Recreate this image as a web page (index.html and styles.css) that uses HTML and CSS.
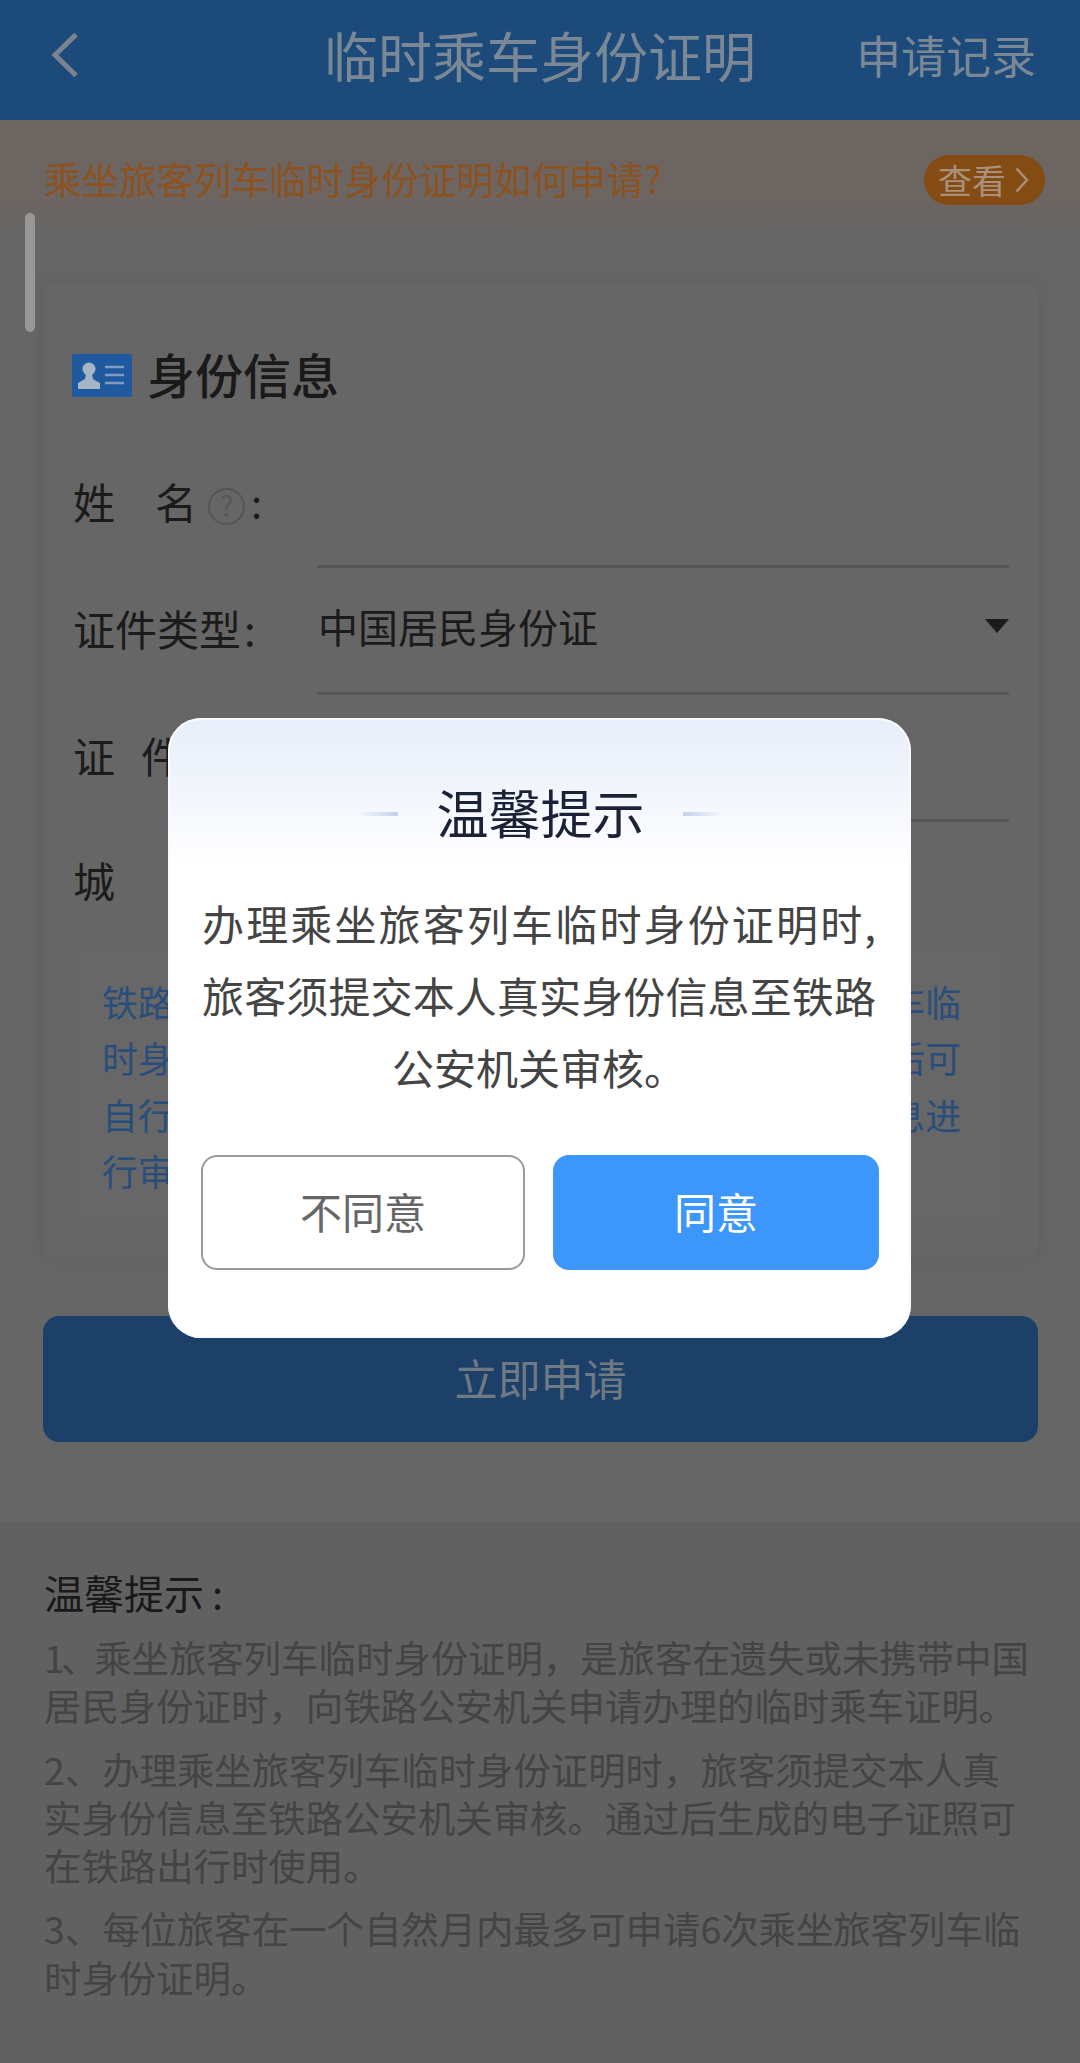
FILE: index.html
```html
<!DOCTYPE html>
<html lang="zh-CN">
<head>
<meta charset="utf-8">
<title>临时乘车身份证明</title>
<link rel="stylesheet" href="styles.css">
</head>
<body>
<div class="page">
  <header class="topbar">
    <svg class="back" viewBox="0 0 30 46" aria-hidden="true"><path d="M26 2.5 5 23l21 20.500"/></svg>
    <h1 class="topbar-title">临时乘车身份证明</h1>
    <a class="topbar-link">申请记录</a>
  </header>

  <div class="notice">
    <span class="notice-text">乘坐旅客列车临时身份证明如何申请?</span>
    <span class="pill">查看<svg class="pill-arrow" viewBox="0 0 14 26" aria-hidden="true"><path d="M1.500 1.500 12 13 1.500 24.500"/></svg></span>
  </div>

  <main class="content">
    <section class="card">
      <div class="card-head">
        <svg class="id-icon" viewBox="0 0 60 43" aria-hidden="true">
          <rect class="id-bg" width="60" height="43" rx="2"/>
          <circle class="id-person" cx="17" cy="15" r="6.500"/>
          <path class="id-person" d="M14 20h6l1 5 7 4v6H6v-6l7-4z"/>
          <path class="id-lines" d="M33 13h19M33 21h19M33 29h19"/>
        </svg>
        <h2 class="card-title">身份信息</h2>
      </div>

      <div class="row">
        <div class="label label-wide"><span>姓</span><span>名</span><i class="help">?</i><span class="colon">:</span></div>
        <div class="value"></div>
      </div>
      <div class="row">
        <div class="label">证件类型<span class="colon-tight">:</span></div>
        <div class="value">中国居民身份证<i class="caret"></i></div>
      </div>
      <div class="row">
        <div class="label label-mid"><span>证</span><span>件</span><span>号</span><span>码</span></div>
        <div class="value"></div>
      </div>
      <div class="row row-plain">
        <div class="label label-city"><span>城</span><span>市</span></div>
        <div class="value"></div>
      </div>

      <div class="info">铁路公安机关依据旅客提交信息，办理乘坐旅客列车临<br>时身份证明。请提交信息经铁路公安机关审核通过后可<br>自行下载使用，铁路公安机关将会对旅客提交的信息进<br>行审核。</div>
    </section>

    <button class="submit">立即申请</button>
  </main>

  <section class="tips">
    <h3 class="tips-title">温馨提示<span class="tips-colon">:</span></h3>
    <p class="tips-item"><span class="num-one">1、</span>乘坐旅客列车临时身份证明，是旅客在遗失或未携带中国<br>居民身份证时，向铁路公安机关申请办理的临时乘车证明。</p>
    <p class="tips-item">2、办理乘坐旅客列车临时身份证明时，旅客须提交本人真<br>实身份信息至铁路公安机关审核。通过后生成的电子证照可<br>在铁路出行时使用。</p>
    <p class="tips-item">3、每位旅客在一个自然月内最多可申请6次乘坐旅客列车临<br>时身份证明。</p>
  </section>

  <div class="scrollbar"></div>

  <div class="modal" role="dialog">
    <div class="modal-head">
      <span class="dash dash-left"></span>
      <h2 class="modal-title">温馨提示</h2>
      <span class="dash dash-right"></span>
    </div>
    <p class="modal-text">办理乘坐旅客列车临时身份证明时,旅客须提交本人真实身份信息至铁路公安机关审核。</p>
    <div class="modal-actions">
      <button class="btn btn-ghost">不同意</button>
      <button class="btn btn-primary">同意</button>
    </div>
  </div>
</div>
</body>
</html>
```
FILE: styles.css
```css
* { box-sizing: border-box; }
html, body { margin: 0; padding: 0; }
body {
  font-family: "Noto Sans CJK SC", "Noto Sans", sans-serif;
  background: #666666;
}
h1, h2, h3, p { margin: 0; font-weight: 400; }
i { font-style: normal; }

.page {
  position: relative;
  width: 1080px;
  height: 2063px;
  overflow: hidden;
  background: #666666;
}

/* top bar */
.topbar {
  height: 120px;
  display: grid;
  grid-template-columns: 1fr auto 1fr;
  align-items: center;
  padding: 0 44px 10px;
  background: #1c4a7a;
  color: #7a8896;
}
.back {
  width: 30px;
  height: 46px;
  margin-left: 6px;
  fill: none;
  stroke: #7a8490;
  stroke-width: 5;
}
.topbar-title { font-size: 54px; line-height: 60px; }
.topbar-link { justify-self: end; font-size: 45px; line-height: 60px; }

/* notice strip */
.notice {
  height: 120px;
  display: flex;
  align-items: center;
  justify-content: space-between;
  padding: 0 35px 0 44px;
  background: linear-gradient(#6c6561 0, #6c6561 65%, #666666 100%);
}
.notice-text {
  font-size: 37.500px;
  line-height: 50px;
  padding-bottom: 4px;
  color: #8c5220;
}
.pill {
  width: 121px;
  height: 50px;
  display: flex;
  align-items: center;
  gap: 9px;
  padding-left: 14px;
  border-radius: 25px;
  background: #844b12;
  color: #a9917c;
  font-size: 34px;
  line-height: 50px;
}
.pill-arrow {
  width: 14px;
  height: 26px;
  fill: none;
  stroke: #a9917c;
  stroke-width: 2.500;
}

/* form */
.content { padding: 45px 42px 0 43px; }
.card {
  height: 971px;
  padding: 65px 27px 0 30px;
  border-radius: 8px;
  background: #666666;
  box-shadow: 0 0 16px rgba(80, 80, 80, 0.3);
}
.card-head {
  display: flex;
  align-items: center;
  gap: 15px;
  height: 50px;
  margin-bottom: 41px;
  margin-left: -1px;
  padding-bottom: 4px;
}
.id-icon { width: 60px; height: 43px; flex: none; margin-top: 4px; }
.id-bg { fill: #1f5a9e; }
.id-person { fill: #a5b5c6; }
.id-lines { fill: none; stroke: #7f9cc0; stroke-width: 2.500; }
.card-title {
  font-size: 48px;
  line-height: 50px;
  font-weight: 500;
  color: #1a1a1a;
}

.row {
  display: grid;
  grid-template-columns: 244px 692px;
  height: 127px;
  align-items: stretch;
  font-size: 40px;
  line-height: 56px;
  color: #1b1b1b;
}
.label {
  display: flex;
  align-items: center;
  padding-bottom: 8px;
  font-size: 42px;
}
.label-wide span:nth-child(2) { margin-left: 40px; }
.label-mid span + span { margin-left: 26px; }
.label-city { padding-bottom: 12px; }
.label-city span + span { margin-left: 70px; }
.help {
  width: 37px;
  height: 37px;
  margin: 12px 0 0 11px;
  flex: none;
  border: 2.500px solid #555555;
  border-radius: 50%;
  font-size: 28px;
  line-height: 31px;
  text-align: center;
  color: #585858;
}
.colon { margin-left: 6px; font-size: 40px; }
.colon-tight { margin-left: 3px; }
.value {
  display: flex;
  align-items: center;
  justify-content: space-between;
  padding-left: 1px;
  padding-bottom: 8px;
  border-bottom: 3px solid #565656;
}
.row-plain .value { border-bottom: 0; }
.caret {
  width: 0;
  height: 0;
  border-left: 12px solid transparent;
  border-right: 12px solid transparent;
  border-top: 14px solid #1b1b1b;
}
.info {
  margin: -1px 0 0 4px;
  padding: 25px 0 0 25px;
  width: 927px;
  height: 266px;
  background: #676767;
  font-size: 35.800px;
  line-height: 56.300px;
  color: #294e7b;
}

.submit {
  display: block;
  width: 995px;
  height: 126px;
  margin-top: 60px;
  padding: 0 0 5px;
  border: 0;
  border-radius: 16px;
  background: #1c4068;
  font-family: inherit;
  font-size: 43px;
  color: #707a84;
}

/* tips */
.tips {
  margin-top: 80px;
  height: 541px;
  padding: 46px 20px 0 44px;
  background: #616161;
}
.tips-title {
  font-size: 40px;
  line-height: 48px;
  margin-bottom: 17px;
  color: #191919;
}
.tips-colon { margin-left: 8px; }
.tips-item {
  font-size: 37.400px;
  line-height: 48.300px;
  margin-bottom: 15px;
  color: #444444;
  white-space: nowrap;
}
.num-one { letter-spacing: -4px; }

.scrollbar {
  position: absolute;
  left: 25px;
  top: 213px;
  width: 10px;
  height: 119px;
  border-radius: 5px;
  background: #979797;
}

/* dialog */
.modal {
  position: absolute;
  left: 168px;
  top: 718px;
  width: 743px;
  height: 620px;
  padding: 64px 32px 0 33px;
  border-radius: 33px;
  background: linear-gradient(#e7eefa 0, #f3f6fc 80px, #ffffff 145px);
  box-shadow: inset 0 0 0 2px #f8faff;
}
.modal-head {
  display: flex;
  align-items: center;
  justify-content: center;
  height: 60px;
  margin-bottom: 45px;
}
.modal-title {
  width: 208px;
  margin: 0 38px 0 39px;
  font-size: 52px;
  line-height: 60px;
  text-align: center;
  color: #1b2238;
}
.dash { width: 40px; height: 4px; margin-top: 4px; }
.dash-left { background: linear-gradient(90deg, rgba(197, 210, 234, 0), #c3d0ea); }
.dash-right { background: linear-gradient(90deg, #c3d0ea, rgba(197, 210, 234, 0)); }
.modal-text {
  height: 217.500px;
  margin: 0 3px 0 1px;
  font-size: 42px;
  line-height: 72px;
  text-align: justify;
  text-align-last: center;
  text-justify: inter-character;
  color: #444444;
}
.modal-actions {
  display: flex;
  justify-content: space-between;
  margin-top: 50px;
}
.btn {
  flex: none;
  height: 115px;
  border-radius: 16px;
  font-family: inherit;
  font-size: 42px;
  padding: 0 0 4px;
}
.btn-ghost { width: 324px; border: 2px solid #9a9a9a; background: #ffffff; color: #666666; }
.btn-primary { width: 326px; border: 0; background: #3d96f9; color: #ffffff; }
```
